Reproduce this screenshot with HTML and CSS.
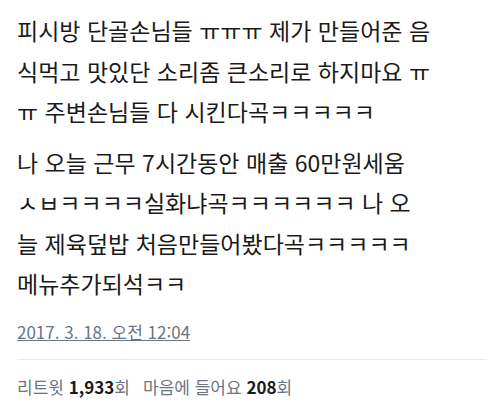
FILE: index.html
```html
<!DOCTYPE html>
<html lang="ko">

<head>
  <meta charset="UTF-8">
  <meta name="viewport" content="width=device-width, initial-scale=1.0">
  <title>트윗</title>
  <link rel="stylesheet" href="styles.css">
</head>

<body>
  <div class="tweet">

    <p class="tweet-text">피시방 단골손님들 ㅠㅠㅠ 제가 만들어준 음<br>식먹고 맛있단 소리좀 큰소리로 하지마요 ㅠ<br>ㅠ 주변손님들 다 시킨다곡ㅋㅋㅋㅋㅋ</p>
    <p class="tweet-text">나 오늘 근무 7시간동안 매출 60만원세움<br>ㅅㅂㅋㅋㅋㅋ실화냐곡ㅋㅋㅋㅋㅋㅋ 나 오<br>늘 제육덮밥 처음만들어봤다곡ㅋㅋㅋㅋㅋ<br>메뉴추가되석ㅋㅋ</p>

    <a class="date" href="#">2017. 3. 18. 오전 12:04</a>

    <div class="stats">
      <span>리트윗 <b>1,933</b>회</span>
      <span>마음에 들어요 <b>208</b>회</span>
    </div>

  </div>
</body>

</html>
```

FILE: styles.css
```css
body {
  margin: 0;
  background: #fff;
  font-family: "Noto Sans CJK KR", "Noto Sans", sans-serif;
}

.tweet {
  padding: 10px 13px 0 17px;
}

.tweet-text {
  margin: 0 0 10px;
  font-size: 23px;
  line-height: 40.5px;
  color: #1a1a1a;
  white-space: nowrap;
}

.date {
  display: inline-block;
  margin-top: 5px;
  font-size: 17px;
  color: #6b7580;
  text-decoration: underline;
}

.stats {
  margin-top: 15px;
  border-top: 1px solid #e6e8ea;
  padding-top: 14px;
  font-size: 17px;
  color: #6b7580;
  display: flex;
  gap: 13px;
}

.stats b {
  color: #1a1a1a;
}
```
